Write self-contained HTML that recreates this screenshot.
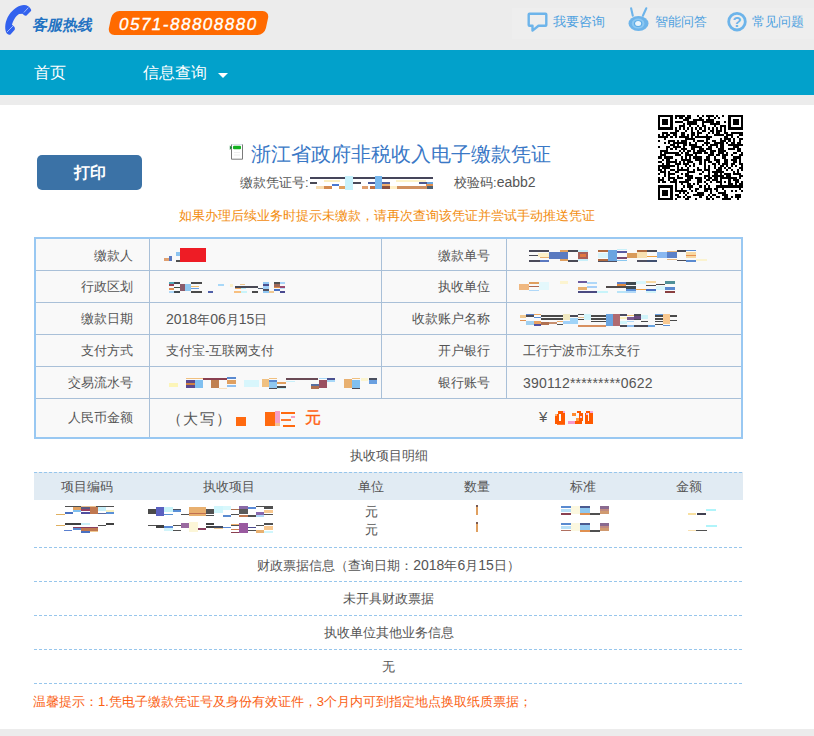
<!DOCTYPE html>
<html><head><meta charset="utf-8">
<style>
html,body{margin:0;padding:0}
body{width:814px;height:736px;overflow:hidden;background:#ececec;position:relative;font-family:"Liberation Sans",sans-serif;}
.t{position:absolute;white-space:nowrap;line-height:1;text-spacing-trim:space-all}
.nav{position:absolute;left:0;top:50px;width:814px;height:45px;background:#02a1cb}
.content{position:absolute;left:0;top:105px;width:814px;height:624px;background:#fff}
.hl{position:absolute;height:1px;background:#a9c0d8}
.vl{position:absolute;width:1px;background:#a9c0d8}
.dash{position:absolute;left:34px;width:709px;height:1px;background:repeating-linear-gradient(90deg,#97c6ec 0 3px,transparent 3px 5px)}
.lab{color:#555;font-size:13px;text-align:right}
.val{color:#555;font-size:13px}
.c{text-align:center;color:#555;font-size:13px}
.d{font-size:14px}
.d2{font-size:14px;letter-spacing:0.2px}
</style></head><body>
<!-- header -->
<svg class="t" style="left:0;top:0" width="36" height="40" viewBox="0 0 36 40">
 <path d="M31 9.5 C30 7 27 5 24 5 C19 5 13 9 9 15 C5 21 4.5 28 6 32 C7 34.5 9 35 10.5 34.5 L14.5 30 C15.2 29 15 27.5 14 26.5 L12 24.8 C13 21 15.5 16 19 14 L22.5 13.8 C24 15.5 25.5 16 26.5 15.5 L30.5 11.5 C31.3 10.8 31.3 10 31 9.5 Z" fill="#3261ee"/>
 <path d="M23.9 12.5 L28.3 7.6 M7 32 L13 26" stroke="#cfe0ff" stroke-width="0.7"/>
</svg>
<div class="t" style="left:32px;top:17px;font-size:15px;font-weight:bold;color:#2272c2;transform:skewX(-12deg);transform-origin:0 100%">客服热线</div>
<div class="t" style="left:110px;top:11px;width:157px;height:24px;background:#ff6a00;border-radius:7px;transform:skewX(-12deg)"></div>
<div class="t" style="left:119px;top:16px;font-size:17px;font-style:italic;color:#fff;letter-spacing:1.5px;-webkit-text-stroke:0.35px #fff">0571-88808880</div>

<div class="t" style="left:512px;top:8px;width:302px;height:31px;background:#eeeeee"></div>
<svg class="t" style="left:527px;top:12px" width="21" height="21" viewBox="0 0 21 21">
 <path d="M2.5 1.7 H18.5 Q19.3 1.7 19.3 2.5 V13 Q19.3 13.8 18.5 13.8 H11.5 L5.5 18.6 V13.8 H2.5 Q1.7 13.8 1.7 13 V2.5 Q1.7 1.7 2.5 1.7 Z" fill="none" stroke="#6db4ea" stroke-width="2.4" stroke-linejoin="round"/>
</svg>
<div class="t" style="left:553px;top:15px;font-size:13px;color:#50a2e0">我要咨询</div>
<svg class="t" style="left:622px;top:4px" width="32" height="32" viewBox="0 0 32 32">
 <path d="M9.1 4.3 L10.8 11.7 M24.3 4.3 L20.9 11.7" stroke="#6db4ea" stroke-width="2.1" stroke-linecap="round"/>
 <ellipse cx="16.5" cy="19.5" rx="10" ry="7.4" fill="#6db4ea"/>
 <ellipse cx="16.1" cy="19.6" rx="6.3" ry="5" fill="#8cc8f2"/><ellipse cx="16.1" cy="19.6" rx="4.2" ry="3.4" fill="#5aaae6"/><ellipse cx="16.1" cy="19.4" rx="3" ry="2.5" fill="#e8f4fc"/>
</svg>
<div class="t" style="left:655px;top:15px;font-size:13px;color:#50a2e0">智能问答</div>
<svg class="t" style="left:726px;top:11px" width="22" height="21" viewBox="0 0 22 21">
 <circle cx="11" cy="10.7" r="8.3" fill="none" stroke="#6db4ea" stroke-width="2.8"/>
 <text x="11" y="16" font-size="15" font-weight="bold" text-anchor="middle" fill="#6db4ea" font-family="Liberation Sans">?</text>
</svg>
<div class="t" style="left:752px;top:15px;font-size:13px;color:#50a2e0">常见问题</div>

<!-- nav -->
<div class="nav"></div>
<div class="t" style="left:34px;top:65px;font-size:16px;color:#fff">首页</div>
<div class="t" style="left:143px;top:65px;font-size:16px;color:#fff">信息查询</div>
<div class="t" style="left:218px;top:73px;width:0;height:0;border-left:5px solid transparent;border-right:5px solid transparent;border-top:5px solid #fff"></div>

<!-- content -->
<div class="content"></div>
<div class="t" style="left:37px;top:155px;width:105px;height:35px;background:#3b72a6;border-radius:5px"></div>
<div class="t" style="left:37px;top:165px;width:105px;text-align:center;font-size:16px;font-weight:bold;color:#fff">打印</div>

<svg class="t" style="left:228px;top:143px" width="17" height="18" viewBox="0 0 17 18">
 <path d="M3.5 1.5 H14.5" stroke="#b8c0d8" stroke-width="1"/>
 <path d="M3.5 1.5 V16.2 H14.5 V1.5" fill="#fff" stroke="#7a7a7a" stroke-width="1"/>
 <path d="M6 9.5 H12 M6 12 H12" stroke="#eee" stroke-width="1"/>
 <rect x="5" y="2.8" width="8" height="3.4" rx="1" fill="#14b020"/>
 <path d="M1.8 2.5 L4.2 4.5 L1.8 7 Z" fill="#1a8a3a"/>
</svg>
<div class="t" style="left:251px;top:144px;font-size:20px;color:#3a78c6">浙江省政府非税收入电子缴款凭证</div>
<div class="t" style="left:240px;top:176px;font-size:13px;color:#555">缴款凭证号:</div>
<div class="t" style="left:454px;top:175px;font-size:13px;color:#555">校验码:<span style="font-size:14px">eabb2</span></div>
<div class="t" style="left:179px;top:209px;font-size:13px;color:#f28c0c">如果办理后续业务时提示未缴款，请再次查询该凭证并尝试手动推送凭证</div>

<!-- QR -->
<svg class="t" style="left:658px;top:115px" width="85" height="85" viewBox="0 0 41 41" shape-rendering="crispEdges"><path d="M0 0h7v1h-7zM8 0h5v1h-5zM14 0h2v1h-2zM19 0h1v1h-1zM21 0h1v1h-1zM23 0h4v1h-4zM28 0h1v1h-1zM31 0h1v1h-1zM34 0h7v1h-7zM0 1h1v1h-1zM6 1h1v1h-1zM8 1h1v1h-1zM10 1h2v1h-2zM13 1h3v1h-3zM20 1h1v1h-1zM24 1h1v1h-1zM27 1h1v1h-1zM29 1h1v1h-1zM34 1h1v1h-1zM40 1h1v1h-1zM0 2h1v1h-1zM2 2h3v1h-3zM6 2h1v1h-1zM12 2h3v1h-3zM17 2h5v1h-5zM23 2h4v1h-4zM34 2h1v1h-1zM36 2h3v1h-3zM40 2h1v1h-1zM0 3h1v1h-1zM2 3h3v1h-3zM6 3h1v1h-1zM8 3h4v1h-4zM14 3h5v1h-5zM21 3h6v1h-6zM28 3h2v1h-2zM32 3h1v1h-1zM34 3h1v1h-1zM36 3h3v1h-3zM40 3h1v1h-1zM0 4h1v1h-1zM2 4h3v1h-3zM6 4h1v1h-1zM12 4h1v1h-1zM14 4h5v1h-5zM21 4h1v1h-1zM25 4h5v1h-5zM34 4h1v1h-1zM36 4h3v1h-3zM40 4h1v1h-1zM0 5h1v1h-1zM6 5h1v1h-1zM10 5h3v1h-3zM15 5h1v1h-1zM19 5h1v1h-1zM21 5h2v1h-2zM27 5h1v1h-1zM30 5h3v1h-3zM34 5h1v1h-1zM40 5h1v1h-1zM0 6h7v1h-7zM8 6h1v1h-1zM10 6h1v1h-1zM12 6h1v1h-1zM14 6h1v1h-1zM16 6h1v1h-1zM18 6h1v1h-1zM20 6h1v1h-1zM22 6h1v1h-1zM24 6h1v1h-1zM26 6h1v1h-1zM28 6h1v1h-1zM30 6h1v1h-1zM32 6h1v1h-1zM34 6h7v1h-7zM8 7h2v1h-2zM13 7h1v1h-1zM16 7h1v1h-1zM19 7h1v1h-1zM21 7h2v1h-2zM25 7h2v1h-2zM28 7h3v1h-3zM32 7h1v1h-1zM2 8h3v1h-3zM6 8h3v1h-3zM11 8h2v1h-2zM16 8h2v1h-2zM19 8h2v1h-2zM24 8h1v1h-1zM26 8h1v1h-1zM28 8h2v1h-2zM32 8h2v1h-2zM35 8h6v1h-6zM0 9h1v1h-1zM2 9h1v1h-1zM4 9h2v1h-2zM7 9h2v1h-2zM11 9h2v1h-2zM14 9h1v1h-1zM16 9h2v1h-2zM19 9h1v1h-1zM23 9h1v1h-1zM27 9h5v1h-5zM33 9h3v1h-3zM39 9h2v1h-2zM0 10h5v1h-5zM6 10h1v1h-1zM8 10h1v1h-1zM10 10h5v1h-5zM16 10h1v1h-1zM18 10h8v1h-8zM32 10h2v1h-2zM35 10h1v1h-1zM38 10h1v1h-1zM3 11h1v1h-1zM13 11h5v1h-5zM23 11h2v1h-2zM30 11h1v1h-1zM32 11h3v1h-3zM36 11h1v1h-1zM39 11h2v1h-2zM0 12h1v1h-1zM5 12h3v1h-3zM9 12h1v1h-1zM11 12h3v1h-3zM17 12h1v1h-1zM19 12h3v1h-3zM23 12h1v1h-1zM26 12h2v1h-2zM30 12h3v1h-3zM34 12h1v1h-1zM36 12h1v1h-1zM39 12h1v1h-1zM3 13h1v1h-1zM5 13h1v1h-1zM7 13h7v1h-7zM15 13h1v1h-1zM18 13h1v1h-1zM22 13h3v1h-3zM27 13h5v1h-5zM33 13h1v1h-1zM35 13h2v1h-2zM38 13h2v1h-2zM6 14h2v1h-2zM9 14h1v1h-1zM12 14h2v1h-2zM15 14h4v1h-4zM21 14h1v1h-1zM23 14h1v1h-1zM25 14h4v1h-4zM30 14h2v1h-2zM34 14h7v1h-7zM0 15h1v1h-1zM4 15h2v1h-2zM7 15h4v1h-4zM12 15h1v1h-1zM16 15h5v1h-5zM24 15h2v1h-2zM28 15h1v1h-1zM30 15h2v1h-2zM36 15h3v1h-3zM4 16h1v1h-1zM6 16h1v1h-1zM8 16h1v1h-1zM11 16h3v1h-3zM16 16h2v1h-2zM20 16h2v1h-2zM23 16h3v1h-3zM29 16h3v1h-3zM34 16h3v1h-3zM38 16h2v1h-2zM1 17h4v1h-4zM10 17h1v1h-1zM12 17h1v1h-1zM14 17h2v1h-2zM17 17h1v1h-1zM19 17h4v1h-4zM25 17h3v1h-3zM29 17h4v1h-4zM38 17h2v1h-2zM1 18h1v1h-1zM3 18h7v1h-7zM11 18h1v1h-1zM13 18h2v1h-2zM17 18h4v1h-4zM22 18h2v1h-2zM25 18h2v1h-2zM29 18h3v1h-3zM33 18h1v1h-1zM36 18h2v1h-2zM40 18h1v1h-1zM1 19h3v1h-3zM8 19h3v1h-3zM13 19h4v1h-4zM18 19h1v1h-1zM24 19h3v1h-3zM28 19h2v1h-2zM31 19h3v1h-3zM35 19h1v1h-1zM39 19h2v1h-2zM0 20h2v1h-2zM3 20h4v1h-4zM11 20h1v1h-1zM13 20h1v1h-1zM15 20h1v1h-1zM17 20h4v1h-4zM23 20h2v1h-2zM27 20h1v1h-1zM31 20h2v1h-2zM36 20h4v1h-4zM2 21h1v1h-1zM4 21h2v1h-2zM8 21h1v1h-1zM11 21h5v1h-5zM18 21h3v1h-3zM22 21h3v1h-3zM27 21h3v1h-3zM32 21h2v1h-2zM35 21h3v1h-3zM39 21h1v1h-1zM0 22h2v1h-2zM4 22h5v1h-5zM10 22h1v1h-1zM12 22h1v1h-1zM14 22h3v1h-3zM20 22h1v1h-1zM22 22h1v1h-1zM24 22h2v1h-2zM28 22h2v1h-2zM32 22h2v1h-2zM36 22h2v1h-2zM39 22h1v1h-1zM2 23h1v1h-1zM4 23h2v1h-2zM8 23h3v1h-3zM12 23h3v1h-3zM17 23h1v1h-1zM20 23h1v1h-1zM22 23h1v1h-1zM26 23h2v1h-2zM29 23h1v1h-1zM31 23h3v1h-3zM35 23h2v1h-2zM39 23h2v1h-2zM0 24h8v1h-8zM9 24h1v1h-1zM13 24h1v1h-1zM15 24h1v1h-1zM17 24h1v1h-1zM22 24h1v1h-1zM24 24h1v1h-1zM27 24h1v1h-1zM30 24h2v1h-2zM33 24h1v1h-1zM35 24h1v1h-1zM37 24h1v1h-1zM40 24h1v1h-1zM0 25h1v1h-1zM2 25h4v1h-4zM9 25h1v1h-1zM11 25h1v1h-1zM14 25h1v1h-1zM19 25h1v1h-1zM22 25h1v1h-1zM24 25h1v1h-1zM27 25h1v1h-1zM29 25h2v1h-2zM32 25h1v1h-1zM34 25h1v1h-1zM39 25h2v1h-2zM0 26h2v1h-2zM3 26h1v1h-1zM6 26h2v1h-2zM9 26h6v1h-6zM17 26h1v1h-1zM19 26h2v1h-2zM22 26h3v1h-3zM28 26h3v1h-3zM33 26h1v1h-1zM35 26h1v1h-1zM38 26h1v1h-1zM40 26h1v1h-1zM1 27h3v1h-3zM5 27h1v1h-1zM8 27h2v1h-2zM14 27h4v1h-4zM21 27h1v1h-1zM24 27h1v1h-1zM26 27h6v1h-6zM36 27h1v1h-1zM38 27h1v1h-1zM0 28h1v1h-1zM3 28h1v1h-1zM5 28h3v1h-3zM11 28h1v1h-1zM13 28h2v1h-2zM20 28h1v1h-1zM24 28h1v1h-1zM27 28h2v1h-2zM30 28h1v1h-1zM32 28h3v1h-3zM36 28h4v1h-4zM3 29h1v1h-1zM5 29h1v1h-1zM9 29h1v1h-1zM13 29h4v1h-4zM22 29h3v1h-3zM26 29h6v1h-6zM33 29h2v1h-2zM39 29h2v1h-2zM0 30h1v1h-1zM2 30h1v1h-1zM5 30h3v1h-3zM9 30h3v1h-3zM14 30h3v1h-3zM18 30h3v1h-3zM22 30h1v1h-1zM24 30h2v1h-2zM27 30h2v1h-2zM30 30h8v1h-8zM39 30h1v1h-1zM0 31h3v1h-3zM5 31h1v1h-1zM7 31h2v1h-2zM13 31h3v1h-3zM19 31h2v1h-2zM23 31h2v1h-2zM26 31h3v1h-3zM30 31h1v1h-1zM34 31h1v1h-1zM36 31h3v1h-3zM0 32h1v1h-1zM2 32h2v1h-2zM6 32h3v1h-3zM10 32h5v1h-5zM19 32h2v1h-2zM22 32h1v1h-1zM25 32h1v1h-1zM28 32h3v1h-3zM32 32h1v1h-1zM34 32h1v1h-1zM37 32h2v1h-2zM40 32h1v1h-1zM8 33h1v1h-1zM11 33h1v1h-1zM14 33h2v1h-2zM17 33h1v1h-1zM19 33h1v1h-1zM23 33h1v1h-1zM30 33h1v1h-1zM34 33h2v1h-2zM37 33h1v1h-1zM39 33h2v1h-2zM0 34h7v1h-7zM8 34h1v1h-1zM12 34h1v1h-1zM14 34h3v1h-3zM20 34h1v1h-1zM22 34h1v1h-1zM24 34h1v1h-1zM28 34h13v1h-13zM0 35h1v1h-1zM6 35h1v1h-1zM8 35h1v1h-1zM11 35h1v1h-1zM15 35h1v1h-1zM18 35h2v1h-2zM22 35h4v1h-4zM27 35h2v1h-2zM31 35h1v1h-1zM39 35h1v1h-1zM0 36h1v1h-1zM2 36h3v1h-3zM6 36h1v1h-1zM8 36h6v1h-6zM16 36h1v1h-1zM18 36h1v1h-1zM22 36h2v1h-2zM25 36h1v1h-1zM28 36h1v1h-1zM32 36h1v1h-1zM35 36h1v1h-1zM37 36h1v1h-1zM40 36h1v1h-1zM0 37h1v1h-1zM2 37h3v1h-3zM6 37h1v1h-1zM10 37h1v1h-1zM12 37h1v1h-1zM14 37h1v1h-1zM19 37h3v1h-3zM25 37h1v1h-1zM29 37h4v1h-4zM0 38h1v1h-1zM2 38h3v1h-3zM6 38h1v1h-1zM8 38h2v1h-2zM13 38h1v1h-1zM17 38h5v1h-5zM24 38h1v1h-1zM26 38h2v1h-2zM31 38h3v1h-3zM37 38h3v1h-3zM0 39h1v1h-1zM6 39h1v1h-1zM9 39h2v1h-2zM12 39h1v1h-1zM14 39h2v1h-2zM20 39h1v1h-1zM23 39h1v1h-1zM25 39h1v1h-1zM28 39h2v1h-2zM32 39h2v1h-2zM35 39h1v1h-1zM37 39h3v1h-3zM0 40h7v1h-7zM8 40h1v1h-1zM13 40h2v1h-2zM18 40h1v1h-1zM23 40h2v1h-2zM26 40h1v1h-1zM31 40h4v1h-4zM38 40h1v1h-1z" fill="#000"/></svg>

<!-- table -->
<div class="t" style="left:34px;top:237px;width:705px;height:198px;border:2px solid #99c8f2;background:#f9f9f9"></div>
<div class="hl" style="left:36px;top:270px;width:705px"></div>
<div class="hl" style="left:36px;top:302px;width:705px"></div>
<div class="hl" style="left:36px;top:334px;width:705px"></div>
<div class="hl" style="left:36px;top:366px;width:705px"></div>
<div class="hl" style="left:36px;top:398px;width:705px"></div>
<div class="vl" style="left:149px;top:239px;height:198px"></div>
<div class="vl" style="left:381px;top:239px;height:159px"></div>
<div class="vl" style="left:506px;top:239px;height:159px"></div>

<div class="t lab" style="right:681px;top:249px">缴款人</div>
<div class="t lab" style="right:681px;top:280px">行政区划</div>
<div class="t lab" style="right:681px;top:312px">缴款日期</div>
<div class="t lab" style="right:681px;top:344px">支付方式</div>
<div class="t lab" style="right:681px;top:376px">交易流水号</div>
<div class="t lab" style="right:681px;top:411px">人民币金额</div>

<div class="t lab" style="right:324px;top:249px">缴款单号</div>
<div class="t lab" style="right:324px;top:280px">执收单位</div>
<div class="t lab" style="right:324px;top:312px">收款账户名称</div>
<div class="t lab" style="right:324px;top:344px">开户银行</div>
<div class="t lab" style="right:324px;top:376px">银行账号</div>

<div class="t val" style="left:166px;top:312px"><span class="d">2018</span>年<span class="d">06</span>月<span class="d">15</span>日</div>
<div class="t val" style="left:166px;top:344px">支付宝-互联网支付</div>
<div class="t val" style="left:523px;top:344px">工行宁波市江东支行</div>
<div class="t val" style="left:523px;top:376px"><span class="d2">390112*********0622</span></div>
<div class="t" style="left:167px;top:411px;font-size:15px;letter-spacing:1.3px;color:#555">（大写）</div>
<div class="t" style="left:305px;top:410px;font-size:16px;color:#ff5e10;-webkit-text-stroke:0.4px #ff5e10">元</div>
<div class="t" style="left:539px;top:409px;font-size:15px;color:#555">¥</div>

<!-- detail -->
<div class="t c" style="left:34px;width:709px;top:449px">执收项目明细</div>
<div class="t" style="left:34px;top:472px;width:709px;height:28px;background:#e1ebf3"></div>
<div class="dash" style="top:472px"></div>
<div class="t c" style="left:34px;width:106px;top:480px">项目编码</div>
<div class="t c" style="left:140px;width:178px;top:480px">执收项目</div>
<div class="t c" style="left:318px;width:106px;top:480px">单位</div>
<div class="t c" style="left:424px;width:106px;top:480px">数量</div>
<div class="t c" style="left:530px;width:106px;top:480px">标准</div>
<div class="t c" style="left:636px;width:106px;top:480px">金额</div>
<div class="t c" style="left:318px;width:106px;top:505px">元</div>
<div class="t c" style="left:318px;width:106px;top:523px">元</div>
<div class="dash" style="top:547px"></div>
<div class="t c" style="left:34px;width:709px;top:558px">财政票据信息（查询日期：<span class="d">2018</span>年<span class="d">6</span>月<span class="d">15</span>日）</div>
<div class="dash" style="top:581px"></div>
<div class="t c" style="left:34px;width:709px;top:592px">未开具财政票据</div>
<div class="dash" style="top:615px"></div>
<div class="t c" style="left:34px;width:709px;top:626px">执收单位其他业务信息</div>
<div class="dash" style="top:649px"></div>
<div class="t c" style="left:34px;width:709px;top:660px">无</div>
<div class="dash" style="top:683px"></div>
<div class="t" style="left:33px;top:695px;font-size:13px;color:#fa5f14">温馨提示：1.凭电子缴款凭证号及身份有效证件，3个月内可到指定地点换取纸质票据；</div>
<!--MOSAIC--><svg class="t" style="left:0;top:0" width="814" height="736" shape-rendering="crispEdges"><rect x="310" y="177" width="35" height="2" fill="#45455a"/><rect x="353" y="177" width="80" height="2" fill="#45455a"/><rect x="345" y="176" width="8" height="14" fill="#c8f2fc"/><rect x="375" y="176" width="7" height="13" fill="#78b8ee"/><rect x="324" y="180" width="16" height="2" fill="#fbeec0"/><rect x="396" y="180" width="30" height="2" fill="#fdf3c8"/><rect x="310" y="182" width="7" height="2" fill="#4a4a55"/><rect x="353" y="182" width="8" height="2" fill="#4a4a5a"/><rect x="368" y="182" width="7" height="2" fill="#4a5a9a"/><rect x="382" y="182" width="8" height="2" fill="#5060a0"/><rect x="419" y="182" width="8" height="2" fill="#505a90"/><rect x="427" y="182" width="6" height="2" fill="#6aa8e0"/><rect x="332" y="184" width="7" height="2" fill="#4a78d0"/><rect x="382" y="184" width="8" height="2" fill="#f0b070"/><rect x="426" y="184" width="7" height="2" fill="#e09050"/><rect x="316" y="186" width="8" height="3" fill="#f8dcb0"/><rect x="324" y="186" width="8" height="3" fill="#d48a50"/><rect x="339" y="186" width="6" height="3" fill="#e0a060"/><rect x="362" y="186" width="6" height="3" fill="#e0a070"/><rect x="370" y="186" width="5" height="3" fill="#c07040"/><rect x="382" y="186" width="8" height="3" fill="#8a5040"/><rect x="390" y="186" width="7" height="3" fill="#fff0c8"/><rect x="397" y="186" width="30" height="3" fill="#d09060"/><rect x="427" y="186" width="6" height="3" fill="#506070"/><rect x="180" y="248" width="26" height="14" fill="#ee1c25"/><rect x="169" y="256" width="3" height="5" fill="#5a78c0"/><rect x="164" y="258" width="5" height="3" fill="#e0a070"/><rect x="176" y="252" width="4" height="4" fill="#8cc4f0"/><rect x="176" y="260" width="4" height="2" fill="#505050"/><rect x="236" y="417" width="10" height="9" fill="#ff6a10"/><rect x="265" y="412" width="10" height="14" fill="#ff6a10"/><rect x="275" y="411" width="5" height="12" fill="#f5a0c8"/><rect x="275" y="423" width="5" height="3" fill="#f8c090"/><rect x="281" y="412" width="14" height="2" fill="#ff6a10"/><rect x="281" y="419" width="10" height="2" fill="#ff7a30"/><rect x="283" y="425" width="12" height="2" fill="#ff6a10"/><rect x="291" y="416" width="4" height="2" fill="#f7a0c0"/><rect x="558" y="411" width="5" height="3" fill="#ff5a00"/><rect x="563" y="411" width="2" height="3" fill="#f8a8d8"/><rect x="555" y="414" width="4" height="10" fill="#ff5a00"/><rect x="555" y="414" width="2" height="2" fill="#ffb070"/><rect x="561" y="413" width="4" height="11" fill="#ff5a00"/><rect x="559" y="421" width="2" height="3" fill="#ff5a00"/><rect x="557" y="424" width="8" height="1" fill="#ff7a30"/><rect x="568" y="421" width="7" height="3" fill="#f898c8"/><rect x="575" y="421" width="7" height="3" fill="#ff5a00"/><rect x="572" y="413" width="4" height="3" fill="#ff8a30"/><rect x="577" y="411" width="4" height="2" fill="#ff5a00"/><rect x="579" y="413" width="4" height="8" fill="#ff5a00"/><rect x="580" y="416" width="2" height="2" fill="#f8c0e0"/><rect x="576" y="418" width="3" height="3" fill="#ff9a40"/><rect x="586" y="411" width="4" height="2" fill="#ff5a00"/><rect x="590" y="411" width="3" height="2" fill="#f8a8d8"/><rect x="585" y="413" width="3" height="11" fill="#ff5a00"/><rect x="586" y="413" width="2" height="2" fill="#f8b0e0"/><rect x="589" y="413" width="4" height="11" fill="#ff5a00"/><rect x="588" y="421" width="2" height="3" fill="#ff5a00"/><rect x="529" y="250" width="20" height="2" fill="#4a4a5a"/><rect x="529" y="255" width="9" height="1" fill="#4a4a55"/><rect x="538" y="253" width="11" height="4" fill="#fdf0c8"/><rect x="540" y="257" width="9" height="1" fill="#e8b070"/><rect x="529" y="260" width="11" height="2" fill="#4a4a5a"/><rect x="540" y="260" width="9" height="2" fill="#5a78c0"/><rect x="549" y="252" width="19" height="7" fill="#5a7ac0"/><rect x="560" y="250" width="8" height="2" fill="#e0a060"/><rect x="560" y="259" width="8" height="2" fill="#e0a060"/><rect x="568" y="250" width="10" height="2" fill="#4a4a55"/><rect x="568" y="260" width="10" height="2" fill="#4a4a55"/><rect x="578" y="250" width="10" height="2" fill="#c8f0fa"/><rect x="578" y="252" width="10" height="7" fill="#a86058"/><rect x="580" y="254" width="6" height="3" fill="#e07840"/><rect x="578" y="259" width="10" height="2" fill="#c8f0fa"/><rect x="598" y="250" width="10" height="2" fill="#b06a40"/><rect x="598" y="253" width="10" height="5" fill="#d8f4fa"/><rect x="598" y="259" width="10" height="2" fill="#b06a40"/><rect x="598" y="261" width="10" height="1" fill="#505060"/><rect x="608" y="250" width="9" height="11" fill="#6aa4e0"/><rect x="608" y="261" width="9" height="1" fill="#505060"/><rect x="617" y="249" width="10" height="1" fill="#c8f0fa"/><rect x="617" y="251" width="10" height="2" fill="#5a5aa0"/><rect x="617" y="257" width="10" height="2" fill="#7a4a70"/><rect x="617" y="260" width="10" height="1" fill="#8ac8f0"/><rect x="627" y="253" width="10" height="5" fill="#d89a5a"/><rect x="637" y="250" width="10" height="2" fill="#b06a40"/><rect x="637" y="252" width="10" height="6" fill="#f8e0b0"/><rect x="637" y="260" width="10" height="2" fill="#505060"/><rect x="647" y="250" width="10" height="2" fill="#4a4a55"/><rect x="647" y="256" width="10" height="1" fill="#f0a040"/><rect x="647" y="260" width="10" height="2" fill="#405070"/><rect x="657" y="252" width="10" height="6" fill="#8ab8f0"/><rect x="667" y="251" width="10" height="1" fill="#e8b880"/><rect x="667" y="252" width="10" height="6" fill="#5a80c8"/><rect x="667" y="259" width="10" height="1" fill="#e8b880"/><rect x="677" y="250" width="9" height="2" fill="#4a4a55"/><rect x="677" y="260" width="9" height="1" fill="#4a4a55"/><rect x="686" y="250" width="10" height="1" fill="#5a8ad0"/><rect x="686" y="252" width="10" height="6" fill="#f8d8a0"/><rect x="686" y="255" width="10" height="1" fill="#e89050"/><rect x="686" y="260" width="10" height="2" fill="#5a8ad0"/><rect x="696" y="259" width="11" height="2" fill="#fbf3d0"/><rect x="169" y="282" width="5" height="2" fill="#50a8b8"/><rect x="169" y="284" width="5" height="2" fill="#9a4050"/><rect x="169" y="288" width="5" height="2" fill="#e09050"/><rect x="169" y="291" width="5" height="2" fill="#b0d8f8"/><rect x="174" y="282" width="6" height="2" fill="#404a50"/><rect x="174" y="287" width="6" height="1" fill="#405040"/><rect x="174" y="291" width="6" height="2" fill="#404a50"/><rect x="180" y="284" width="5" height="7" fill="#8a5a6a"/><rect x="185" y="284" width="6" height="7" fill="#90c8f0"/><rect x="191" y="282" width="11" height="2" fill="#4a4a4a"/><rect x="191" y="286" width="8" height="1" fill="#f0c070"/><rect x="191" y="288" width="8" height="1" fill="#6aa0e0"/><rect x="191" y="291" width="11" height="2" fill="#4a4a4a"/><rect x="208" y="291" width="5" height="2" fill="#5060a8"/><rect x="218" y="284" width="6" height="2" fill="#a8d8f8"/><rect x="230" y="284" width="3" height="3" fill="#fbf0c8"/><rect x="240" y="284" width="5" height="1" fill="#f0c890"/><rect x="235" y="286" width="23" height="2" fill="#4a4a55"/><rect x="235" y="288" width="6" height="1" fill="#f0a860"/><rect x="241" y="288" width="5" height="1" fill="#b8ecf8"/><rect x="234" y="291" width="7" height="2" fill="#f8c080"/><rect x="241" y="291" width="6" height="2" fill="#c8f4fa"/><rect x="252" y="291" width="6" height="2" fill="#4a4a4a"/><rect x="258" y="288" width="5" height="1" fill="#4a5a70"/><rect x="263" y="282" width="6" height="2" fill="#90c8f4"/><rect x="263" y="284" width="6" height="2" fill="#4a5090"/><rect x="263" y="286" width="6" height="3" fill="#a0d0f8"/><rect x="263" y="289" width="6" height="2" fill="#505060"/><rect x="263" y="291" width="6" height="2" fill="#90c8f4"/><rect x="269" y="291" width="5" height="2" fill="#f0c890"/><rect x="274" y="282" width="6" height="2" fill="#505050"/><rect x="274" y="284" width="6" height="4" fill="#a06a5a"/><rect x="274" y="287" width="6" height="1" fill="#e08a40"/><rect x="274" y="289" width="6" height="2" fill="#4a70c0"/><rect x="280" y="282" width="5" height="2" fill="#a8d4f8"/><rect x="280" y="286" width="5" height="2" fill="#9a4a70"/><rect x="280" y="288" width="5" height="1" fill="#c0e0f8"/><rect x="280" y="291" width="5" height="2" fill="#4a4a90"/><rect x="519" y="284" width="10" height="6" fill="#f0b880"/><rect x="529" y="282" width="10" height="2" fill="#e0a060"/><rect x="529" y="286" width="10" height="1" fill="#b06a50"/><rect x="529" y="290" width="10" height="1" fill="#b0d8f8"/><rect x="539" y="282" width="10" height="8" fill="#e4f8fc"/><rect x="560" y="281" width="8" height="3" fill="#fcf4d0"/><rect x="578" y="281" width="9" height="2" fill="#6a5aa0"/><rect x="578" y="287" width="9" height="3" fill="#e8b070"/><rect x="578" y="291" width="9" height="2" fill="#4a4a80"/><rect x="587" y="282" width="10" height="2" fill="#b0d8f8"/><rect x="587" y="286" width="10" height="2" fill="#a8d0f8"/><rect x="587" y="291" width="10" height="2" fill="#4a4a80"/><rect x="597" y="291" width="11" height="2" fill="#c8f4fa"/><rect x="606" y="286" width="20" height="2" fill="#504a4a"/><rect x="617" y="282" width="9" height="2" fill="#5a80c8"/><rect x="617" y="284" width="9" height="2" fill="#e08a40"/><rect x="617" y="291" width="9" height="2" fill="#b8e4f8"/><rect x="626" y="282" width="10" height="3" fill="#404a50"/><rect x="626" y="286" width="10" height="3" fill="#404a50"/><rect x="626" y="289" width="10" height="2" fill="#5a90d8"/><rect x="626" y="291" width="10" height="2" fill="#b0d8f8"/><rect x="636" y="281" width="10" height="3" fill="#d8f6fc"/><rect x="636" y="289" width="10" height="1" fill="#f0a040"/><rect x="646" y="281" width="10" height="2" fill="#f8d8a0"/><rect x="646" y="285" width="10" height="1" fill="#505050"/><rect x="646" y="289" width="10" height="2" fill="#4a70c0"/><rect x="646" y="291" width="10" height="2" fill="#d0f4fa"/><rect x="656" y="284" width="9" height="1" fill="#504a4a"/><rect x="656" y="286" width="9" height="4" fill="#d8f6fc"/><rect x="665" y="281" width="10" height="3" fill="#509098"/><rect x="665" y="287" width="10" height="3" fill="#5a8ad0"/><rect x="665" y="291" width="10" height="2" fill="#8a4040"/><rect x="520" y="315" width="6" height="3" fill="#f0c890"/><rect x="520" y="320" width="6" height="1" fill="#e09050"/><rect x="526" y="314" width="8" height="1" fill="#5a80c8"/><rect x="526" y="315" width="8" height="2" fill="#4a4a55"/><rect x="526" y="321" width="8" height="4" fill="#a0d0f0"/><rect x="534" y="314" width="7" height="1" fill="#f0a860"/><rect x="534" y="317" width="7" height="1" fill="#5a90d8"/><rect x="534" y="321" width="7" height="3" fill="#e8a060"/><rect x="534" y="324" width="7" height="2" fill="#5050a0"/><rect x="541" y="315" width="22" height="2" fill="#4a4a4a"/><rect x="541" y="318" width="22" height="2" fill="#4a4a4a"/><rect x="541" y="322" width="8" height="3" fill="#b07050"/><rect x="549" y="322" width="8" height="2" fill="#c89070"/><rect x="557" y="321" width="6" height="1" fill="#f0b070"/><rect x="557" y="324" width="6" height="1" fill="#505050"/><rect x="563" y="314" width="7" height="6" fill="#f0e8c0"/><rect x="563" y="321" width="7" height="3" fill="#a0d0f8"/><rect x="570" y="315" width="8" height="2" fill="#4a4a55"/><rect x="570" y="318" width="8" height="6" fill="#a0d4f8"/><rect x="578" y="314" width="6" height="1" fill="#4a4a4a"/><rect x="578" y="317" width="6" height="1" fill="#e8c090"/><rect x="578" y="319" width="6" height="1" fill="#4a4a4a"/><rect x="578" y="325" width="6" height="2" fill="#d89060"/><rect x="584" y="314" width="7" height="6" fill="#d0f4fa"/><rect x="584" y="325" width="7" height="2" fill="#d89060"/><rect x="591" y="315" width="15" height="2" fill="#4a4a4a"/><rect x="591" y="318" width="15" height="2" fill="#4a4a4a"/><rect x="591" y="321" width="15" height="1" fill="#4a4a4a"/><rect x="591" y="325" width="15" height="2" fill="#d89060"/><rect x="606" y="314" width="7" height="12" fill="#6aa4e0"/><rect x="613" y="314" width="7" height="12" fill="#b06a70"/><rect x="620" y="314" width="7" height="2" fill="#4a4a60"/><rect x="620" y="317" width="7" height="2" fill="#fbf0c0"/><rect x="620" y="321" width="7" height="3" fill="#d0f4fa"/><rect x="620" y="325" width="7" height="2" fill="#4a4a55"/><rect x="627" y="315" width="7" height="1" fill="#f0c070"/><rect x="627" y="317" width="7" height="3" fill="#7a5a90"/><rect x="627" y="321" width="7" height="1" fill="#b0d8f8"/><rect x="627" y="325" width="7" height="2" fill="#90c0f0"/><rect x="634" y="314" width="7" height="2" fill="#4a4a55"/><rect x="634" y="316" width="7" height="3" fill="#6a4a80"/><rect x="634" y="319" width="7" height="1" fill="#4a4a55"/><rect x="634" y="325" width="7" height="2" fill="#4a4a55"/><rect x="641" y="315" width="7" height="4" fill="#d0f4fa"/><rect x="641" y="321" width="7" height="1" fill="#4a4a4a"/><rect x="641" y="325" width="7" height="2" fill="#4a4a55"/><rect x="648" y="325" width="7" height="2" fill="#6aa4e0"/><rect x="655" y="314" width="8" height="1" fill="#6aa0e0"/><rect x="655" y="315" width="8" height="2" fill="#4a4a4a"/><rect x="655" y="318" width="8" height="2" fill="#4a4a4a"/><rect x="655" y="321" width="8" height="1" fill="#4a4a4a"/><rect x="655" y="324" width="8" height="1" fill="#4a4a4a"/><rect x="663" y="314" width="7" height="10" fill="#f8c890"/><rect x="663" y="325" width="7" height="1" fill="#5a90d8"/><rect x="670" y="315" width="7" height="2" fill="#4a4a4a"/><rect x="670" y="320" width="7" height="1" fill="#4a4a4a"/><rect x="169" y="383" width="9" height="4" fill="#fcf5b8"/><rect x="186" y="378" width="17" height="1" fill="#f0c080"/><rect x="186" y="380" width="9" height="8" fill="#5a4a90"/><rect x="186" y="383" width="9" height="2" fill="#d08040"/><rect x="195" y="380" width="8" height="8" fill="#80c0f0"/><rect x="203" y="378" width="24" height="2" fill="#8a4050"/><rect x="211" y="380" width="8" height="8" fill="#c08050"/><rect x="219" y="388" width="8" height="1" fill="#f8e0c0"/><rect x="227" y="377" width="9" height="2" fill="#5a8ad0"/><rect x="227" y="380" width="9" height="4" fill="#e0a060"/><rect x="227" y="385" width="9" height="2" fill="#90c0f0"/><rect x="244" y="380" width="15" height="7" fill="#d8f6fc"/><rect x="262" y="379" width="7" height="8" fill="#f0c080"/><rect x="269" y="378" width="8" height="1" fill="#f0c080"/><rect x="269" y="380" width="8" height="2" fill="#5a8ad0"/><rect x="269" y="382" width="8" height="6" fill="#90c8f0"/><rect x="269" y="388" width="8" height="1" fill="#4a4a55"/><rect x="277" y="382" width="9" height="2" fill="#e0a060"/><rect x="277" y="386" width="9" height="2" fill="#4a4a4a"/><rect x="277" y="388" width="9" height="1" fill="#c8f0fa"/><rect x="286" y="378" width="32" height="2" fill="#6a4a55"/><rect x="286" y="381" width="9" height="1" fill="#c8f0fa"/><rect x="311" y="384" width="8" height="2" fill="#5a70a0"/><rect x="311" y="386" width="8" height="3" fill="#b07050"/><rect x="319" y="378" width="8" height="1" fill="#a8d8f8"/><rect x="319" y="380" width="8" height="8" fill="#9a5060"/><rect x="327" y="378" width="8" height="2" fill="#4a5090"/><rect x="327" y="380" width="8" height="2" fill="#a8d8f8"/><rect x="344" y="379" width="8" height="9" fill="#e8b070"/><rect x="352" y="378" width="8" height="1" fill="#f0c080"/><rect x="352" y="380" width="8" height="8" fill="#80c0f0"/><rect x="352" y="388" width="8" height="1" fill="#4a4a55"/><rect x="361" y="378" width="7" height="3" fill="#fcf5d0"/><rect x="369" y="378" width="8" height="2" fill="#4a5060"/><rect x="369" y="380" width="8" height="4" fill="#6aa0e0"/><rect x="65" y="506" width="16" height="1" fill="#505050"/><rect x="81" y="506" width="15" height="1" fill="#e8c090"/><rect x="96" y="506" width="18" height="1" fill="#505050"/><rect x="73" y="507" width="8" height="3" fill="#e0a060"/><rect x="73" y="510" width="8" height="2" fill="#80c0f0"/><rect x="81" y="507" width="9" height="2" fill="#5a5a80"/><rect x="81" y="509" width="9" height="2" fill="#9a4060"/><rect x="81" y="512" width="9" height="2" fill="#5050a0"/><rect x="90" y="507" width="8" height="7" fill="#c07850"/><rect x="98" y="507" width="8" height="4" fill="#c8f0fa"/><rect x="98" y="513" width="16" height="1" fill="#5a6aa0"/><rect x="106" y="510" width="8" height="2" fill="#f8f0c0"/><rect x="106" y="512" width="8" height="2" fill="#5a90d8"/><rect x="65" y="512" width="8" height="2" fill="#4a70c0"/><rect x="56" y="514" width="9" height="1" fill="#e0b060"/><rect x="56" y="525" width="9" height="1" fill="#e0b060"/><rect x="65" y="523" width="16" height="2" fill="#404040"/><rect x="81" y="523" width="9" height="2" fill="#c8f0fa"/><rect x="73" y="527" width="25" height="1" fill="#8a4060"/><rect x="73" y="528" width="8" height="2" fill="#5a8ad0"/><rect x="81" y="528" width="17" height="3" fill="#c07850"/><rect x="81" y="531" width="9" height="2" fill="#4a70c0"/><rect x="90" y="531" width="8" height="1" fill="#f0c890"/><rect x="64" y="530" width="8" height="1" fill="#5a80d0"/><rect x="98" y="525" width="8" height="1" fill="#505050"/><rect x="106" y="523" width="8" height="2" fill="#404040"/><rect x="148" y="509" width="8" height="5" fill="#4a4a4a"/><rect x="156" y="507" width="8" height="9" fill="#5a60c0"/><rect x="164" y="507" width="9" height="5" fill="#c8f4fa"/><rect x="164" y="514" width="9" height="1" fill="#5a90d0"/><rect x="173" y="509" width="8" height="1" fill="#4a5060"/><rect x="173" y="510" width="8" height="2" fill="#5a90d8"/><rect x="181" y="514" width="8" height="1" fill="#505050"/><rect x="189" y="507" width="17" height="9" fill="#e8b070"/><rect x="189" y="513" width="17" height="1" fill="#c07050"/><rect x="206" y="509" width="8" height="5" fill="#505050"/><rect x="206" y="515" width="8" height="1" fill="#505050"/><rect x="214" y="506" width="9" height="7" fill="#d0f6fc"/><rect x="223" y="506" width="8" height="4" fill="#d8f8fc"/><rect x="223" y="515" width="8" height="2" fill="#5a8ad0"/><rect x="231" y="509" width="8" height="1" fill="#b07050"/><rect x="231" y="514" width="8" height="1" fill="#505050"/><rect x="239" y="506" width="9" height="3" fill="#8a6aa8"/><rect x="239" y="509" width="9" height="5" fill="#5a5a5a"/><rect x="239" y="515" width="9" height="2" fill="#c07850"/><rect x="248" y="507" width="8" height="2" fill="#5a8ad8"/><rect x="248" y="515" width="8" height="2" fill="#505050"/><rect x="256" y="506" width="8" height="1" fill="#505050"/><rect x="256" y="512" width="8" height="3" fill="#8a6ab0"/><rect x="256" y="515" width="8" height="2" fill="#b0d8f8"/><rect x="264" y="506" width="9" height="3" fill="#505050"/><rect x="264" y="510" width="9" height="3" fill="#f8c890"/><rect x="264" y="514" width="9" height="1" fill="#505050"/><rect x="148" y="525" width="8" height="1" fill="#505050"/><rect x="156" y="525" width="8" height="3" fill="#404040"/><rect x="164" y="526" width="9" height="2" fill="#5a8ad8"/><rect x="164" y="528" width="9" height="3" fill="#d0f4fa"/><rect x="173" y="525" width="8" height="1" fill="#505050"/><rect x="173" y="530" width="8" height="1" fill="#505050"/><rect x="181" y="523" width="8" height="5" fill="#9a6aa0"/><rect x="189" y="522" width="9" height="10" fill="#fcf6d8"/><rect x="198" y="528" width="8" height="2" fill="#8a4060"/><rect x="206" y="523" width="8" height="2" fill="#404040"/><rect x="206" y="526" width="8" height="2" fill="#404040"/><rect x="214" y="526" width="9" height="2" fill="#404a60"/><rect x="214" y="528" width="9" height="1" fill="#f0c890"/><rect x="223" y="527" width="8" height="1" fill="#5a8ad8"/><rect x="231" y="524" width="8" height="1" fill="#f0b070"/><rect x="231" y="525" width="8" height="1" fill="#505050"/><rect x="231" y="529" width="8" height="1" fill="#d08050"/><rect x="231" y="532" width="8" height="1" fill="#8a4050"/><rect x="239" y="523" width="9" height="10" fill="#9a5aa0"/><rect x="248" y="527" width="8" height="1" fill="#4a4a90"/><rect x="248" y="530" width="8" height="1" fill="#505050"/><rect x="256" y="525" width="8" height="1" fill="#505050"/><rect x="256" y="530" width="8" height="3" fill="#e8b070"/><rect x="264" y="523" width="9" height="2" fill="#505050"/><rect x="264" y="526" width="9" height="4" fill="#f8c890"/><rect x="264" y="531" width="9" height="2" fill="#d0f6fc"/><rect x="476" y="505" width="2" height="2" fill="#7a5a50"/><rect x="476" y="507" width="2" height="8" fill="#e0a060"/><rect x="561" y="506" width="10" height="2" fill="#5a8ad0"/><rect x="561" y="509" width="10" height="3" fill="#b8e0f8"/><rect x="561" y="513" width="10" height="2" fill="#8a4050"/><rect x="571" y="506" width="9" height="8" fill="#fcf8e0"/><rect x="580" y="506" width="10" height="2" fill="#4a5a90"/><rect x="580" y="508" width="10" height="5" fill="#90c8f0"/><rect x="580" y="513" width="10" height="2" fill="#e09050"/><rect x="590" y="513" width="10" height="2" fill="#505050"/><rect x="600" y="506" width="9" height="3" fill="#8a6a90"/><rect x="600" y="509" width="9" height="2" fill="#c08a80"/><rect x="600" y="511" width="9" height="3" fill="#d09a70"/><rect x="476" y="522" width="2" height="2" fill="#7a5a50"/><rect x="476" y="524" width="2" height="8" fill="#e0a060"/><rect x="561" y="523" width="10" height="2" fill="#5a8ad0"/><rect x="561" y="526" width="10" height="3" fill="#b8e0f8"/><rect x="561" y="530" width="10" height="1" fill="#b07060"/><rect x="571" y="523" width="9" height="8" fill="#fcf8e0"/><rect x="580" y="523" width="10" height="2" fill="#4a5a90"/><rect x="580" y="525" width="10" height="5" fill="#90c8f0"/><rect x="580" y="530" width="10" height="2" fill="#e09050"/><rect x="590" y="530" width="10" height="2" fill="#505050"/><rect x="600" y="523" width="9" height="3" fill="#8a6a90"/><rect x="600" y="526" width="9" height="2" fill="#c08a80"/><rect x="600" y="528" width="9" height="3" fill="#d09a70"/><rect x="688" y="513" width="8" height="2" fill="#f8e0a0"/><rect x="697" y="513" width="9" height="2" fill="#404050"/><rect x="706" y="509" width="10" height="2" fill="#b0f4fa"/><rect x="688" y="530" width="8" height="1" fill="#f8e0b0"/><rect x="696" y="530" width="11" height="1" fill="#505050"/><rect x="706" y="525" width="11" height="2" fill="#b0f4fa"/></svg><!--/MOSAIC-->
</body></html>
